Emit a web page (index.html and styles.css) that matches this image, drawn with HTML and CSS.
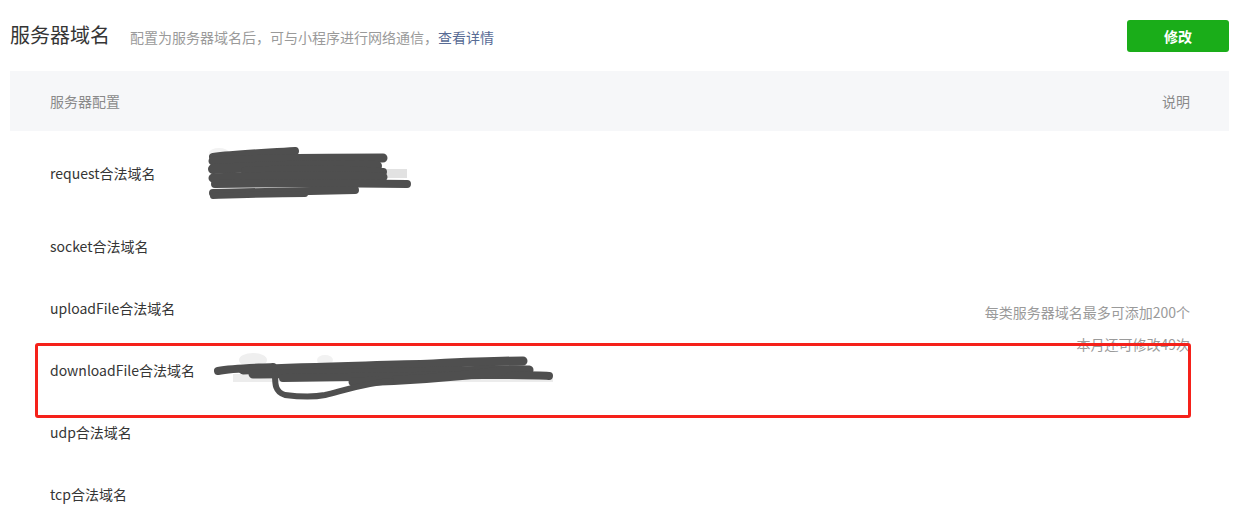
FILE: index.html
```html
<!DOCTYPE html>
<html lang="zh">
<head>
<meta charset="utf-8">
<title>服务器域名</title>
<link rel="stylesheet" href="styles.css">
</head>
<body>
<div class="page">
  <div class="head">
    <div class="head-left">
      <h2 class="title">服务器域名</h2>
      <p class="desc">配置为服务器域名后，可与小程序进行网络通信，<a class="link" href="#">查看详情</a></p>
    </div>
    <button class="btn">修改</button>
  </div>
  <table class="tbl">
    <thead>
      <tr>
        <th class="c-label">服务器配置</th>
        <th class="c-value"></th>
        <th class="c-note">说明</th>
      </tr>
    </thead>
    <tbody>
      <tr class="r-first">
        <td class="c-label">request合法域名</td>
        <td class="c-value">
          <svg class="scribble s1" width="210" height="56" viewBox="0 0 210 56">
            <ellipse cx="14" cy="6" rx="10" ry="5" fill="#f2f2f2"/>
            <rect x="170" y="22" width="32" height="9" fill="#e2e2e2"/>
            <g fill="none" stroke="#4f4f4f" stroke-linecap="round" stroke-linejoin="round">
              <path d="M8 10 C30 7 60 6 90 4" stroke-width="8"/>
              <path d="M8 14 C50 12 110 11 178 11" stroke-width="9"/>
              <path d="M8 22 C60 19 120 18 172 19" stroke-width="10"/>
              <path d="M40 24 C90 22 140 22 178 25" stroke-width="8"/>
              <path d="M8 31 C60 29 130 28 178 30" stroke-width="9"/>
              <path d="M10 37 C70 36 140 36 202 37" stroke-width="8"/>
              <path d="M8 46 C50 45 100 44 150 43" stroke-width="8"/>
              <path d="M8 49 C40 48 70 47 100 47" stroke-width="6"/>
            </g>
          </svg>
        </td>
        <td class="c-note" rowspan="6">
          <p class="note">每类服务器域名最多可添加200个</p>
          <p class="note">本月还可修改49次</p>
        </td>
      </tr>
      <tr>
        <td class="c-label">socket合法域名</td>
        <td class="c-value"></td>
      </tr>
      <tr>
        <td class="c-label">uploadFile合法域名</td>
        <td class="c-value"></td>
      </tr>
      <tr>
        <td class="c-label">downloadFile合法域名</td>
        <td class="c-value">
          <svg class="scribble s2" width="345" height="52" viewBox="0 0 345 52">
            <ellipse cx="40" cy="8" rx="14" ry="7" fill="#efefef"/>
            <ellipse cx="112" cy="8" rx="8" ry="5" fill="#f2f2f2"/>
            <rect x="20" y="22" width="320" height="8" fill="#ececec"/>
            <g fill="none" stroke="#4f4f4f" stroke-linecap="round" stroke-linejoin="round">
              <path d="M5 19 C20 16 40 16 60 15" stroke-width="8"/>
              <path d="M30 18 C90 15 160 14 220 12 C260 10 290 9 310 9" stroke-width="9"/>
              <path d="M40 22 C100 21 170 21 240 19 C280 18 305 17 316 18" stroke-width="9"/>
              <path d="M70 26 C130 25 200 24 270 23 C300 23 325 23 336 24" stroke-width="8"/>
              <path d="M140 30 C190 29 240 25 290 19" stroke-width="9"/>
              <path d="M62 22 C62 32 62 40 72 43 C88 45 102 45 112 43 C132 38 152 31 178 29" stroke-width="6"/>
            </g>
          </svg>
        </td>
      </tr>
      <tr>
        <td class="c-label">udp合法域名</td>
        <td class="c-value"></td>
      </tr>
      <tr>
        <td class="c-label">tcp合法域名</td>
        <td class="c-value"></td>
      </tr>
    </tbody>
  </table>
  <div class="mark"></div>
</div>
</body>
</html>
```

FILE: styles.css
```css
* { box-sizing: border-box; }
html, body { margin: 0; padding: 0; background: #fff; }
body {
  font-family: "Noto Sans CJK SC", "Noto Sans", sans-serif;
  color: #353535;
  font-size: 14px;
}
.page {
  position: relative;
  padding: 0 10px 0 10px;
  width: 1239px;
  height: 525px;
  overflow: hidden;
}
.head {
  display: flex;
  align-items: center;
  justify-content: space-between;
  height: 71px;
}
.head-left {
  display: flex;
  align-items: baseline;
  gap: 20px;
  padding-bottom: 1px;
}
.title {
  margin: 0;
  font-size: 20px;
  font-weight: 400;
  color: #353535;
  line-height: 28px;
}
.desc {
  margin: 0;
  font-size: 14px;
  color: #9a9a9a;
}
.link { color: #576b95; text-decoration: none; }
.btn {
  width: 102px;
  height: 32px;
  border: 0;
  border-radius: 3px;
  background: #1aad19;
  color: #fff;
  font-family: inherit;
  font-size: 14px;
  font-weight: 700;
}
.tbl {
  width: 100%;
  border-collapse: collapse;
  table-layout: fixed;
}
.tbl th {
  height: 60px;
  background: #f6f7f9;
  font-weight: 400;
  color: #8a8a8a;
  text-align: left;
  padding: 0;
}
.tbl td { padding: 0; height: 62px; vertical-align: middle; }
.tbl tr.r-first td { height: 84px; }
.tbl .c-label { padding-left: 40px; width: 195px; white-space: nowrap; }
.tbl .c-value { width: 600px; }
.tbl th.c-note, .tbl td.c-note { text-align: right; padding-right: 39px; }
.note { margin: 0; line-height: 32px; color: #9a9a9a; }
.scribble { display: block; }
.s1 { margin-left: 0; margin-top: 2px; margin-bottom: -2px; }
.s2 { margin-left: 8px; margin-top: 8px; margin-bottom: -8px; }
.mark {
  position: absolute;
  left: 35px;
  top: 343px;
  width: 1156px;
  height: 75px;
  border: 3px solid #f5211a;
  border-radius: 3px;
}
```
